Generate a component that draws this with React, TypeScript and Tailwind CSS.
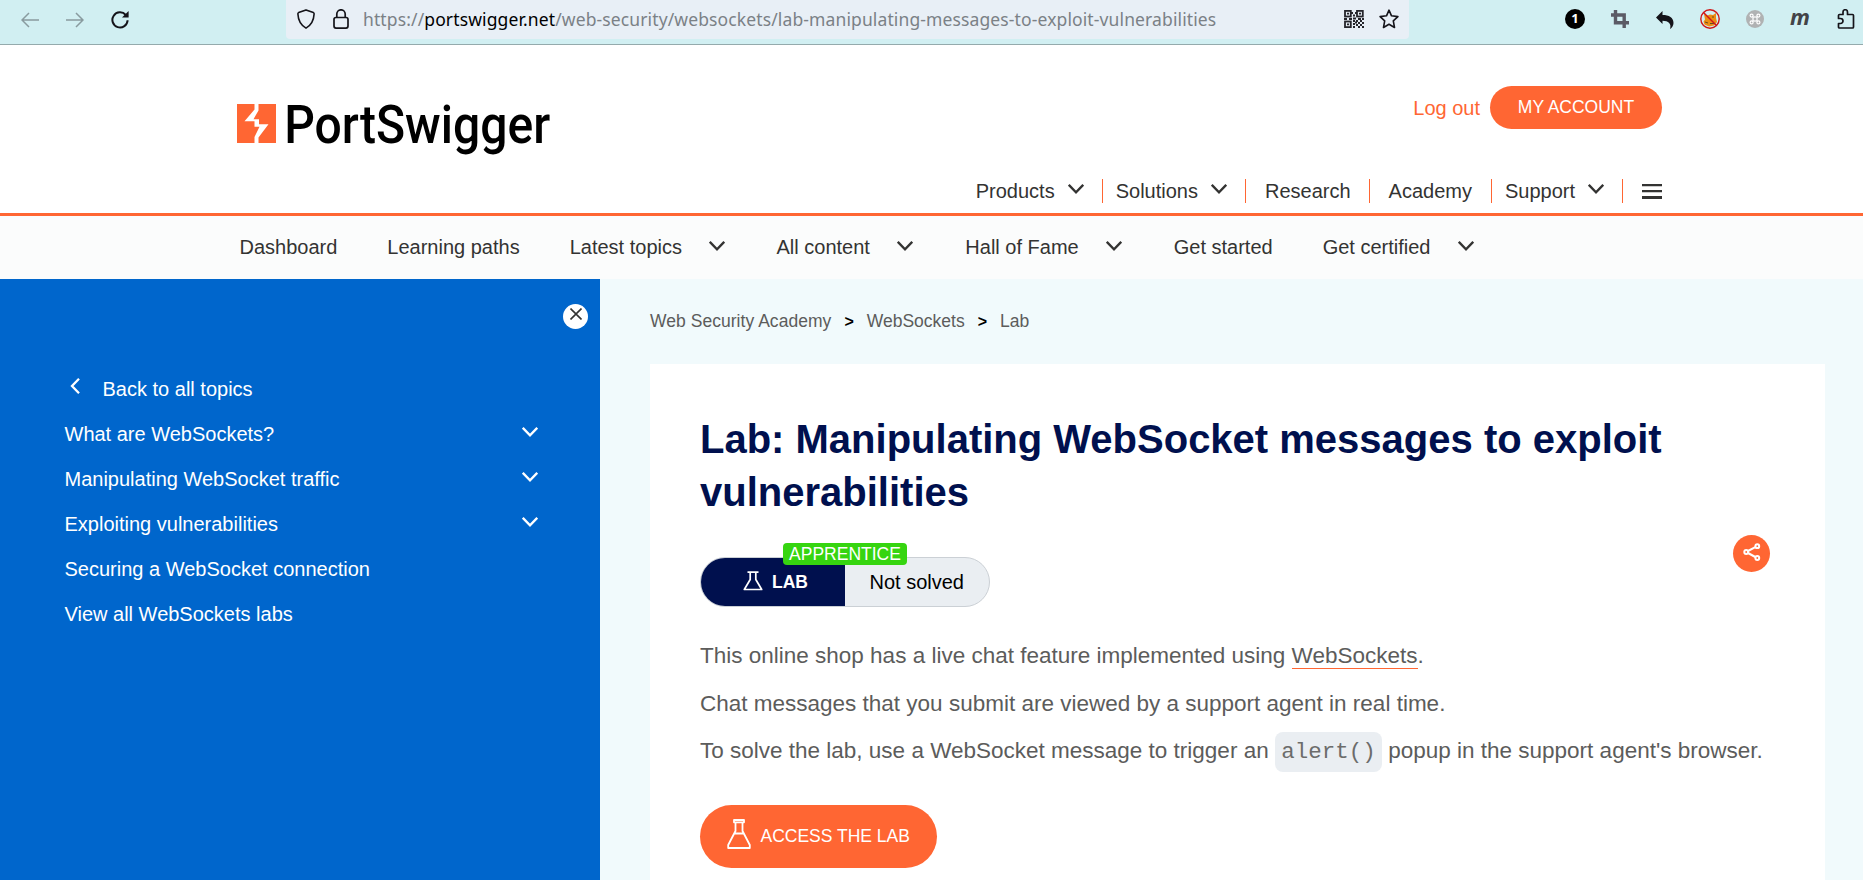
import React from "react";

function Chevron({ className = "" }: { className?: string }) {
  return (
    <svg viewBox="0 0 16 10" className={`h-[10px] w-4 shrink-0 ${className}`} fill="none" stroke="currentColor" strokeWidth="2.3">
      <path d="M.8 .8L8 8.300 15.200 .8" />
    </svg>
  );
}

function Shield() {
  return (
    <svg viewBox="0 0 18 20" className="h-5 w-[18px]" fill="none" stroke="#15141a" strokeWidth="1.6" strokeLinejoin="round">
      <path d="M9 .9L16.4 3.6Q17.2 4 17.1 5C16.8 10.8 14.6 16 9 19.1C3.4 16 1.2 10.8.9 5Q.8 4 1.6 3.6Z" />
    </svg>
  );
}

function Lock() {
  return (
    <svg viewBox="0 0 16 20" className="h-5 w-4" fill="none" stroke="#15141a" strokeWidth="1.7">
      <rect x="1" y="8.5" width="14" height="10.6" rx="2" />
      <path d="M3.8 8.5V5a4.2 4.2 0 0 1 8.4 0v3.5" />
    </svg>
  );
}

function QrCode() {
  return (
    <svg viewBox="0 0 20 18" className="h-[18px] w-5" fill="none" stroke="#25252b" strokeWidth="1.8">
      <rect x="1" y=".9" width="5.8" height="5.6" />
      <rect x="13" y=".9" width="5.8" height="5.6" />
      <rect x="1" y="11.5" width="5.8" height="5.6" />
      <path d="M3 3.700h2M15 3.700h2M3 14.300h2M7 3h2M11 3h2M9 5.500h2M0 9h3M5 9h3M9 8.500h3M14 9h3M18 9h2M9 11h2M12 11h2M16 11h2M9 14h2M11 12.500h2M14 13h2M18 13h2M12 15h2M16 15h2M9 17h2M14 17h2M18 17h2" />
    </svg>
  );
}

function Star() {
  return (
    <svg viewBox="0 0 20 20" className="h-5 w-5" fill="none" stroke="#15141a" strokeWidth="1.6" strokeLinejoin="round">
      <path d="M10 1.2l2.5 5.6 6.4.8-4.6 4.3 1.2 6.6L10 15.3l-5.5 3.2 1.2-6.6L1.1 7.6l6.4-.8z" />
    </svg>
  );
}

function Toolbar() {
  return (
    <div className="flex h-[45px] shrink-0 items-start border-b border-[#94aaac] bg-[#d1eff2]">
      <svg viewBox="0 0 18 16" className="mt-3 ml-[21px] h-4 w-[18px]" fill="none" stroke="#899b9f" strokeWidth="1.5">
        <path d="M18 8H1.2M8 1L1 8l7 7" />
      </svg>
      <svg viewBox="0 0 18 16" className="mt-3 ml-[27px] h-4 w-[18px]" fill="none" stroke="#899b9f" strokeWidth="1.5">
        <path d="M0 8h16.8M10 1l7 7-7 7" />
      </svg>
      <svg viewBox="0 0 18 18" className="mt-[11px] ml-[27px] h-[18px] w-[18px]" fill="none" stroke="#15141a" strokeWidth="2">
        <path d="M16.6 9.2A7.6 7.6 0 1 1 14.8 4" />
        <path d="M17.6 0v6.6H11z" fill="#15141a" stroke="none" />
      </svg>
      <div className="ml-[157px] flex h-[39px] w-[1123px] items-start rounded-b-[4px] bg-[#e8eff6] pt-[9px] pl-[11px]">
        <Shield />
        <div className="ml-[18px]"><Lock /></div>
        <div className="ml-[14px] h-6 w-[981px] font-['Noto_Sans','Open_Sans',sans-serif] text-[17.5px] leading-[21px] tracking-[0.12px] whitespace-nowrap text-[#7b8186]">
          https://<span className="text-black">portswigger.net</span>/web-security/websockets/lab-manipulating-messages-to-exploit-vulnerabilities
        </div>
        <div className="mt-px"><QrCode /></div>
        <div className="ml-[15px]"><Star /></div>
      </div>
      <div className="mt-[9px] ml-[156px] flex h-5 w-5 items-center justify-center rounded-full bg-black font-['Open_Sans',sans-serif] text-[13px] font-bold text-white">1</div>
      <svg viewBox="0 0 18 18" className="mt-[10px] ml-[26px] h-[18px] w-[18px]" fill="none" stroke="#5b5b66" strokeWidth="3.4">
        <path d="M4.500 0v12.700H18M0 5h13.200V18" />
      </svg>
      <svg viewBox="0 0 18 18" className="mt-[11px] ml-[27px] h-[18px] w-[18px]" fill="#15141a">
        <path d="M0 6.5L6.5 0v4C13 4 17.5 6.5 17.5 12c0 2.500-1.500 5-3.500 6 1.800-5-1.500-8.200-7.500-8.200V13z" />
      </svg>
      <svg viewBox="0 0 20 20" className="mt-[9px] ml-[26px] h-5 w-5">
        <path d="M4 5l3.500 1.500L10 5.500l3 .5 3-2v5l1 4-3 3.500-5 1-4.500-2-1-3 1.500-2z" fill="#ec8d13" />
        <path d="M5 13l3 1M10 14.500h4M12 8h2" stroke="#6b4a20" strokeWidth="1" />
        <circle cx="10" cy="10" r="9.200" fill="none" stroke="#cf1717" strokeWidth="1.400" />
        <path d="M3.500 3.500l13 13" stroke="#cf1717" strokeWidth="1.400" />
      </svg>
      <svg viewBox="0 0 18 18" className="mt-[10px] ml-[26px] h-[18px] w-[18px]">
        <circle cx="9" cy="9" r="9" fill="#b0b2b3" />
        <g fill="none" stroke="#fff" strokeWidth="1.200">
          <rect x="7" y="7" width="4" height="4" />
          <circle cx="5.600" cy="5.600" r="1.500" />
          <circle cx="12.400" cy="5.600" r="1.500" />
          <circle cx="5.600" cy="12.400" r="1.500" />
          <circle cx="12.400" cy="12.400" r="1.500" />
        </g>
      </svg>
      <div className="ml-[26px] w-5 font-['Open_Sans',sans-serif] text-[22px] leading-[33px] font-bold text-[#434347] italic">m</div>
      <svg viewBox="0 0 18 20" className="mt-[9px] ml-[27px] h-5 w-[18px]" fill="none" stroke="#15141a" strokeWidth="1.7" strokeLinejoin="round">
        <path d="M1.500 8.500V6.500q0-1 1-1H6V3a2 2 0 0 1 4.500 0v2.500h5q1 0 1 1V18q0 1-1 1h-13q-1 0-1-1v-3.500h2a2.400 2.400 0 0 0 0-5h-2z" />
      </svg>
    </div>
  );
}

function Divider({ className = "" }: { className?: string }) {
  return <span className={`h-6 w-px shrink-0 bg-[#ff6633] ${className}`} />;
}

function Header() {
  return (
    <header className="flex h-[171px] shrink-0 justify-between border-b-[3px] border-[#ff6633] bg-white pr-[201px] pl-[237px]">
      <svg viewBox="0 0 320 72" className="mt-[54px] h-[72px] w-[320px] overflow-visible">
        <rect x="0" y="5" width="39" height="39" fill="#ff6633" />
        <path d="M17.500 5v5.500L7.500 22.200H17.500v5.500h5L17.500 38V44h4V38.500L31.500 25.200H22V20.200H16.500L21.500 11.500V5z" fill="#fff" />
        <text x="47.200" y="43.500" textLength="266" lengthAdjust="spacingAndGlyphs" className="font-['Roboto',sans-serif] text-[54px] font-medium">PortSwigger</text>
      </svg>
      <div className="flex flex-col items-end">
        <div className="mt-[41px] flex h-[43px] items-center text-xl">
          <a className="text-[#ff6633]">Log out</a>
          <button className="ml-[10px] h-[43px] w-[172px] rounded-full bg-[#ff6633] text-[17.5px] text-white">MY ACCOUNT</button>
        </div>
        <nav className="mt-[50px] flex h-6 items-center text-xl whitespace-nowrap text-[#333332]">
          <span>Products</span>
          <Chevron className="mb-1 ml-[13px]" />
          <Divider className="ml-[18px]" />
          <span className="ml-[13px]">Solutions</span>
          <Chevron className="mb-1 ml-[13px]" />
          <Divider className="ml-[18px]" />
          <span className="ml-[19px]">Research</span>
          <Divider className="ml-[18px]" />
          <span className="ml-[19px]">Academy</span>
          <Divider className="ml-[19px]" />
          <span className="ml-[13px]">Support</span>
          <Chevron className="mb-1 ml-[13px]" />
          <Divider className="ml-[18px]" />
          <svg viewBox="0 0 20 15" className="ml-[19px] h-[15px] w-5" fill="#333332">
            <path d="M0 0h20v2.300H0zM0 6h20v2.300H0zM0 12h20v3H0z" />
          </svg>
        </nav>
      </div>
    </header>
  );
}

function SubNav() {
  return (
    <nav className="flex h-[63px] shrink-0 items-center bg-[#fbfcfc] pb-[2px] pl-[239.5px] text-xl whitespace-nowrap text-[#333332]">
      <span>Dashboard</span>
      <span className="ml-[50px]">Learning paths</span>
      <span className="ml-[50px]">Latest topics</span>
      <Chevron className="mb-px ml-[27px]" />
      <span className="ml-[51.5px]">All content</span>
      <Chevron className="mb-px ml-[27px]" />
      <span className="ml-[52.5px]">Hall of Fame</span>
      <Chevron className="mb-px ml-[27px]" />
      <span className="ml-[52px]">Get started</span>
      <span className="ml-[50px]">Get certified</span>
      <Chevron className="mb-px ml-[27.5px]" />
    </nav>
  );
}

const topics = [
  { label: "What are WebSockets?", expandable: true },
  { label: "Manipulating WebSocket traffic", expandable: true },
  { label: "Exploiting vulnerabilities", expandable: true },
  { label: "Securing a WebSocket connection", expandable: false },
  { label: "View all WebSockets labs", expandable: false },
];

function Sidebar() {
  return (
    <aside className="w-[600px] shrink-0 bg-[#0066cc] text-xl text-white">
      <div className="flex justify-end pt-[25px] pr-3">
        <button className="flex h-[25px] w-[25px] justify-center rounded-full bg-white pt-1">
          <svg viewBox="0 0 12 12" className="h-3 w-3" stroke="#333332" strokeWidth="1.600">
            <path d="M.5 .5l11 11M11.500 .5l-11 11" />
          </svg>
        </button>
      </div>
      <div className="mt-[37px] flex h-[45px] items-center pl-[70px]">
        <svg viewBox="0 0 10 16" className="mb-[5px] h-4 w-[10px]" fill="none" stroke="currentColor" strokeWidth="2.300">
          <path d="M9 .8L2 8l7 7.200" />
        </svg>
        <span className="ml-[22.5px]">Back to all topics</span>
      </div>
      {topics.map((topic) => (
        <div key={topic.label} className="flex h-[45px] items-center justify-between pr-[62px] pl-[64.5px]">
          <span>{topic.label}</span>
          {topic.expandable && <Chevron className="mb-[3px]" />}
        </div>
      ))}
    </aside>
  );
}

function LabBadge() {
  return (
    <div className="relative mt-[39px] flex h-[50px] w-[290px] rounded-full border border-[#cbd0d5] bg-[#eaeef2]">
      <div className="flex w-[144px] items-center rounded-l-full bg-[#00104e] pl-[42px] text-[17.5px] font-bold text-white">
        <svg viewBox="0 0 20 20" className="mb-[2px] h-5 w-5" fill="none" stroke="currentColor" strokeWidth="1.700">
          <path d="M4.500 1.200h11M7.200 1v7.500L1.300 18.500h17.400L12.800 8.500V1" strokeLinejoin="round" />
        </svg>
        <span className="ml-[9px]">LAB</span>
      </div>
      <span className="ml-[24.5px] self-center text-xl text-black">Not solved</span>
      <span className="absolute -top-[15px] left-[82px] h-[22px] w-[124px] rounded-[4px] bg-[#36d510] text-center text-[17.5px] leading-[22px] text-white">APPRENTICE</span>
    </div>
  );
}

function Content() {
  return (
    <main className="flex-1 bg-[#f1fafc] pr-[38px] pl-[50px]">
      <div className="flex h-[85px] items-center text-[17.5px] text-[#5c5c5b]">
        <span className="tracking-[0.04px]">Web Security Academy</span>
        <span className="mx-[13px] text-[16px] font-bold text-black">&gt;</span>
        <span>WebSockets</span>
        <span className="mx-[13px] text-[16px] font-bold text-black">&gt;</span>
        <span>Lab</span>
      </div>
      <article className="relative h-[516px] bg-white pt-[49px] pl-[50px] text-[22.5px] text-[#5c5c5b]">
        <h1 className="w-[1000px] text-[40px] leading-[52.5px] font-bold text-[#00104e]">
          Lab: Manipulating WebSocket messages to exploit vulnerabilities
        </h1>
        <button className="absolute top-[171px] right-[55px] flex h-[37px] w-[37px] justify-center rounded-full bg-[#ff6633] pt-2">
          <svg viewBox="0 0 18 18" className="h-[18px] w-[18px]" fill="none" stroke="#fff" strokeWidth="2">
            <circle cx="3.200" cy="9" r="1.900" />
            <circle cx="14.300" cy="3.200" r="1.900" />
            <circle cx="14.300" cy="15" r="1.900" />
            <path d="M5 8l7.300-3.800M5 10l7.300 4" />
          </svg>
        </button>
        <LabBadge />
        <p className="mt-[25px] h-12 leading-[48px]">
          This online shop has a live chat feature implemented using{" "}
          <a className="border-b border-[#ff6633]">WebSockets</a>.
        </p>
        <p className="h-[47px] leading-[48px]">Chat messages that you submit are viewed by a support agent in real time.</p>
        <p className="h-12 leading-[48px] whitespace-nowrap">
          To solve the lab, use a WebSocket message to trigger an{" "}
          <code className="rounded-lg bg-[#eaeef2] px-[6.25px] py-[7px] font-['Liberation_Mono',monospace] text-[#6c6c6b]">alert()</code>{" "}
          popup in the support agent's browser.
        </p>
        <button className="mt-[30px] flex h-[63px] w-[237px] items-center rounded-full bg-[#ff6633] pl-[27px] text-[17.5px] text-white">
          <svg viewBox="0 0 24 30" className="mb-[5px] h-[30px] w-6" fill="none" stroke="currentColor" strokeWidth="1.800" strokeLinejoin="round">
            <path d="M7 1h10v2.300H7zM8.500 3.300V12L1.200 26V29h21.600v-3L15.500 12V3.300M7.500 14.500h9" />
          </svg>
          <span className="ml-[9.5px]">ACCESS THE LAB</span>
        </button>
      </article>
    </main>
  );
}

export default function App() {
  return (
    <div className="flex h-[880px] w-[1863px] flex-col overflow-hidden font-['Liberation_Sans',Arial,sans-serif]">
      <Toolbar />
      <Header />
      <SubNav />
      <div className="flex min-h-0 flex-1">
        <Sidebar />
        <Content />
      </div>
    </div>
  );
}
